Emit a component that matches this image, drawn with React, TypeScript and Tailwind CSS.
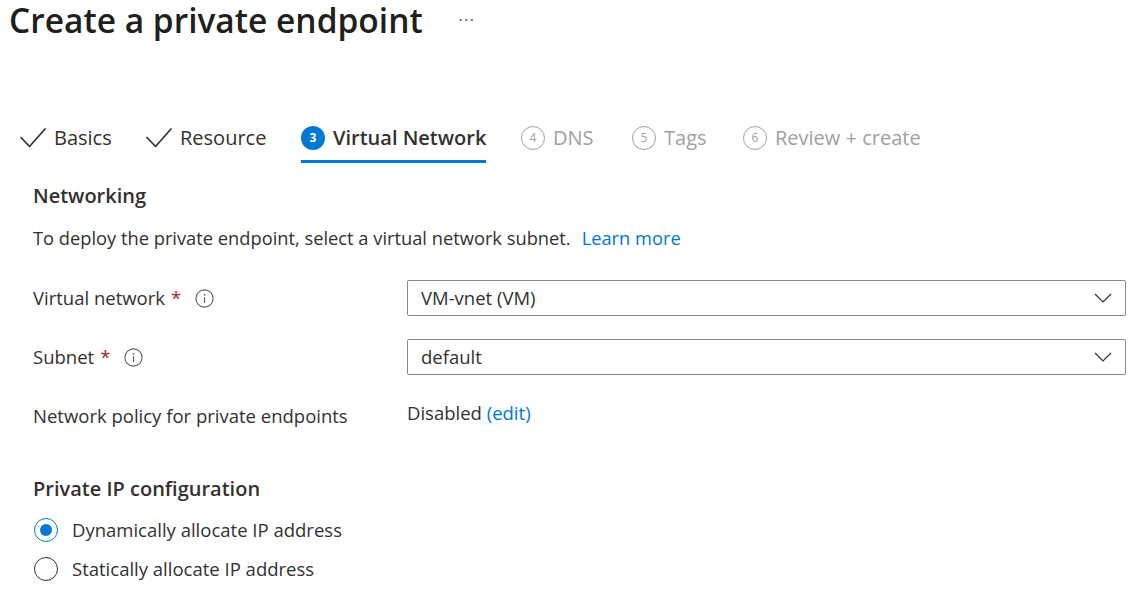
import { ReactNode } from 'react';

const Check = () => (
  <svg width="26" height="20" viewBox="0 0 26 20" fill="none" className="shrink-0">
    <path d="M1 9.5 L9.5 18.5 L25 1" stroke="#323130" strokeWidth="1.7" strokeLinecap="round" strokeLinejoin="round" />
  </svg>
);

const Step = ({ n, active }: { n: number; active?: boolean }) =>
  active ? (
    <span className="size-[24px] shrink-0 rounded-full bg-[#0078d4] text-white text-[12px] font-bold flex items-center justify-center">{n}</span>
  ) : (
    <span className="size-[24px] shrink-0 rounded-full border border-[#a19f9d] text-[#a19f9d] text-[12px] flex items-center justify-center">{n}</span>
  );

const Tab = ({ icon, label, width, active, disabled }: { icon: ReactNode; label: string; width: string; active?: boolean; disabled?: boolean }) => (
  <div className={`${width} shrink-0 flex`}>
    <div className={`flex items-center gap-[8px] h-[39px] pb-[8px] border-b-[3px] ${active ? 'border-[#0078d4]' : 'border-transparent'}`}>
      {icon}
      <span className={`text-[20px] leading-[28px] whitespace-nowrap ${disabled ? 'text-[#a19f9d]' : 'text-[#323130]'} ${active ? 'font-semibold' : ''}`}>{label}</span>
    </div>
  </div>
);

const Info = () => (
  <svg width="19" height="19" viewBox="0 0 19 19" fill="none" className="shrink-0">
    <circle cx="9.5" cy="9.5" r="8.6" stroke="#605e5c" strokeWidth="1.1" />
    <circle cx="9.5" cy="5.8" r="0.9" fill="#605e5c" />
    <path d="M9.5 8.3 V14" stroke="#605e5c" strokeWidth="1.2" />
  </svg>
);

const Chevron = () => (
  <svg width="18" height="10" viewBox="0 0 18 10" fill="none">
    <path d="M1 1 L9 9 L17 1" stroke="#323130" strokeWidth="1.2" />
  </svg>
);

const Dropdown = ({ value }: { value: string }) => (
  <div className="w-[719px] h-[36px] border border-[#8a8886] rounded-[2px] flex items-center justify-between pl-[13px] pr-[13px]">
    <span className="text-[18.5px] text-[#323130]">{value}</span>
    <Chevron />
  </div>
);

const FieldRow = ({ label, value }: { label: string; value: string }) => (
  <div className="flex items-center">
    <div className="w-[374px] flex items-center">
      <span className="text-[18.5px] text-[#323130]">{label}</span>
      <span className="text-[18.5px] text-[#a4262c] ml-[6px]">*</span>
      <span className="ml-[14px]"><Info /></span>
    </div>
    <Dropdown value={value} />
  </div>
);

const Radio = ({ checked, label }: { checked?: boolean; label: string }) => (
  <div className="flex items-center h-[28px]">
    <span className={`size-[24px] ml-[1px] rounded-full border flex items-center justify-center ${checked ? 'border-[#0078d4]' : 'border-[#323130]'}`}>
      {checked && <span className="size-[12px] rounded-full bg-[#0078d4]" />}
    </span>
    <span className="ml-[14px] text-[18.5px] text-[#323130]">{label}</span>
  </div>
);

export default function App() {
  return (
    <div className="w-[1129px] h-[594px] overflow-hidden bg-white font-['Open_Sans',sans-serif]">
      <div className="flex items-center pl-[9px] h-[40px]">
        <h1 className="text-[33.5px] leading-[40px] font-semibold text-[#201f1e] whitespace-nowrap">Create a private endpoint</h1>
        <span className="ml-[36px] -mt-[2px] text-[14px] text-[#323130] tracking-[2px]">···</span>
      </div>

      <div className="flex pl-[20px] mt-[84px]">
        <Tab width="w-[126px]" icon={<Check />} label="Basics" />
        <Tab width="w-[155px]" icon={<Check />} label="Resource" />
        <Tab width="w-[220px]" icon={<Step n={3} active />} label="Virtual Network" active />
        <Tab width="w-[111px]" icon={<Step n={4} />} label="DNS" disabled />
        <Tab width="w-[111px]" icon={<Step n={5} />} label="Tags" disabled />
        <Tab width="w-[200px]" icon={<Step n={6} />} label="Review + create" disabled />
      </div>

      <div className="pl-[33px]">
        <h2 className="mt-[19px] text-[20px] leading-[28px] font-semibold text-[#323130]">Networking</h2>
        <p className="mt-[16px] text-[18.3px] leading-[24px] text-[#323130]">
          To deploy the private endpoint, select a virtual network subnet.
          <span className="ml-[11px] text-[#0078d4]">Learn more</span>
        </p>

        <div className="mt-[30px] flex flex-col gap-[23px]">
          <FieldRow label="Virtual network" value="VM-vnet (VM)" />
          <FieldRow label="Subnet" value="default" />
        </div>

        <div className="mt-[29px] flex items-start">
          <span className="w-[374px] text-[18.5px] leading-[24px] text-[#323130]">Network policy for private endpoints</span>
          <span className="-mt-[3px] text-[18.5px] leading-[24px] text-[#323130]">
            Disabled <span className="text-[#0078d4]">(edit)</span>
          </span>
        </div>

        <h2 className="mt-[47px] text-[20px] leading-[28px] font-semibold text-[#323130]">Private IP configuration</h2>
        <div className="mt-[13px] flex flex-col gap-[11px]">
          <Radio checked label="Dynamically allocate IP address" />
          <Radio label="Statically allocate IP address" />
        </div>
      </div>
    </div>
  );
}
